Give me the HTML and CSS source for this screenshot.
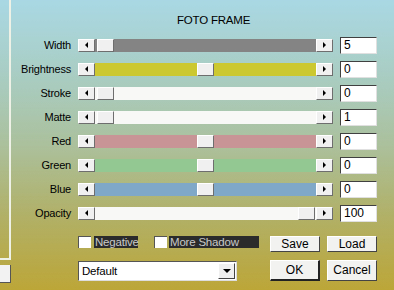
FILE: index.html
```html
<!DOCTYPE html>
<html lang="en">
<head>
  <meta charset="UTF-8" />
  <title>Foto Frame</title>
  <link rel="stylesheet" href="styles.css">
</head>
<body>
  <div class="dialog">
    <div class="side">
      <div class="pane"></div>
      <div class="side-btn"></div>
    </div>

    <div class="main">
      <div class="title">FOTO FRAME</div>

      <div class="rows">
        <label class="name">Width</label>
        <div class="slider">
          <span class="arrow left"></span>
          <div class="track gray"><span class="thumb" style="margin-left:2px"></span></div>
          <span class="arrow right"></span>
        </div>
        <input class="value" type="text" value="5" />

        <label class="name">Brightness</label>
        <div class="slider">
          <span class="arrow left"></span>
          <div class="track yellow"><span class="thumb" style="margin-left:102px"></span></div>
          <span class="arrow right"></span>
        </div>
        <input class="value" type="text" value="0" />

        <label class="name">Stroke</label>
        <div class="slider">
          <span class="arrow left"></span>
          <div class="track white"><span class="thumb" style="margin-left:2px"></span></div>
          <span class="arrow right"></span>
        </div>
        <input class="value" type="text" value="0" />

        <label class="name">Matte</label>
        <div class="slider">
          <span class="arrow left"></span>
          <div class="track white"><span class="thumb" style="margin-left:2px"></span></div>
          <span class="arrow right"></span>
        </div>
        <input class="value" type="text" value="1" />

        <label class="name">Red</label>
        <div class="slider">
          <span class="arrow left"></span>
          <div class="track red"><span class="thumb" style="margin-left:102px"></span></div>
          <span class="arrow right"></span>
        </div>
        <input class="value" type="text" value="0" />

        <label class="name">Green</label>
        <div class="slider">
          <span class="arrow left"></span>
          <div class="track green"><span class="thumb" style="margin-left:102px"></span></div>
          <span class="arrow right"></span>
        </div>
        <input class="value" type="text" value="0" />

        <label class="name">Blue</label>
        <div class="slider">
          <span class="arrow left"></span>
          <div class="track blue"><span class="thumb" style="margin-left:102px"></span></div>
          <span class="arrow right"></span>
        </div>
        <input class="value" type="text" value="0" />

        <label class="name">Opacity</label>
        <div class="slider">
          <span class="arrow left"></span>
          <div class="track white"><span class="thumb" style="margin-left:203px"></span></div>
          <span class="arrow right"></span>
        </div>
        <input class="value" type="text" value="100" />
      </div>

      <div class="bottom">
        <div class="options">
          <div class="checks">
            <span class="box"></span><span class="check-label">Negative</span>
            <span class="box second"></span><span class="check-label wide">More Shadow</span>
          </div>
          <div class="select">
            <span class="select-text">Default</span>
            <span class="select-btn"></span>
          </div>
        </div>
        <div class="buttons">
          <button class="btn">Save</button>
          <button class="btn">Load</button>
          <button class="btn big default">OK</button>
          <button class="btn big">Cancel</button>
        </div>
      </div>
    </div>
  </div>
</body>
</html>
```

FILE: styles.css
```css
html, body {
  margin: 0;
  height: 100%;
  overflow: hidden;
}
body {
  font-family: "Liberation Sans", Arial, sans-serif;
  font-size: 11px;
  letter-spacing: -0.2px;
  color: #000;
  background: linear-gradient(#a9d8e4 0%, #a9cbbd 30%, #abc09c 50%, #b1b066 75%, #bca638 100%);
}
.dialog {
  display: flex;
  height: 290px;
}

/* left edge of the parent window */
.side {
  width: 11px;
  flex: none;
}
.pane {
  height: 258px;
  width: 9px;
  border-right: 2px solid #eef2e6;
  border-bottom: 2px solid #eef2e6;
}
.side-btn {
  margin-top: 5px;
  height: 18px;
  width: 11px;
  box-sizing: border-box;
  background: #f2f2f2;
  border-right: 1px solid #555;
  border-bottom: 1px solid #555;
}

.main {
  flex: 1;
}
.title {
  padding: 14px 0 0 166px;
  height: 13px;
  line-height: 13px;
  font-size: 11.5px;
}
.rows {
  margin-top: 6px;
  display: grid;
  grid-template-columns: 60px 255px 37px;
  grid-auto-rows: 24px;
  column-gap: 7px;
  align-items: center;
}
.name {
  text-align: right;
}

.slider {
  display: flex;
  height: 13px;
}
.arrow, .thumb {
  box-sizing: border-box;
  width: 17px;
  height: 13px;
  background: #f0f0f0;
  border-top: 1px solid #fff;
  border-left: 1px solid #fff;
  border-right: 1px solid #6e6e6e;
  border-bottom: 1px solid #6e6e6e;
  flex: none;
}
.arrow {
  display: flex;
  align-items: center;
  justify-content: center;
}
.arrow::after {
  content: "";
  border-top: 3px solid transparent;
  border-bottom: 3px solid transparent;
}
.arrow.left::after {
  border-right: 3px solid #000;
}
.arrow.right::after {
  border-left: 3px solid #000;
}
.track {
  flex: 1;
  display: flex;
}
.thumb {
  display: block;
}
.gray { background: #848484; }
.yellow { background: #cbc92f; }
.white { background: #f8f8f6; }
.red { background: #c99496; }
.green { background: #93c893; }
.blue { background: #7fa7c8; }

.value {
  box-sizing: border-box;
  width: 37px;
  height: 17px;
  margin: 0;
  padding: 0 0 0 3px;
  font: inherit;
  font-size: 12px;
  background: #fff;
  border-top: 1px solid #404040;
  border-left: 1px solid #404040;
  border-right: 1px solid #e0e0e0;
  border-bottom: 1px solid #e0e0e0;
}

.bottom {
  display: flex;
  margin: 11px 0 0 67px;
}
.options {
  width: 192px;
}
.checks {
  display: flex;
  align-items: center;
  height: 12px;
}
.box {
  box-sizing: border-box;
  width: 13px;
  height: 12px;
  background: #fff;
  border-top: 1px solid #555;
  border-left: 1px solid #555;
  margin-right: 3px;
}
.box.second {
  margin-left: 16px;
  margin-right: 2px;
}
.check-label {
  background: #2b2b2b;
  color: #c8c8c8;
  height: 12px;
  line-height: 12px;
  width: 43px;
  padding-left: 1px;
  font-size: 11.5px;
}
.check-label.wide {
  width: 89px;
}
.select {
  margin-top: 13px;
  box-sizing: border-box;
  width: 159px;
  height: 20px;
  background: #fff;
  border-top: 1px solid #555;
  border-left: 1px solid #555;
  border-right: 1px solid #ddd;
  border-bottom: 1px solid #ddd;
  display: flex;
  align-items: center;
  justify-content: space-between;
  padding: 0 1px 0 3px;
}
.select-text {
  font-size: 11.5px;
}
.select-btn {
  box-sizing: border-box;
  width: 17px;
  height: 16px;
  background: #f0f0f0;
  border-top: 1px solid #fff;
  border-left: 1px solid #fff;
  border-right: 1px solid #444;
  border-bottom: 1px solid #444;
  display: flex;
  align-items: center;
  justify-content: center;
}
.select-btn::after {
  content: "";
  border-left: 4px solid transparent;
  border-right: 4px solid transparent;
  border-top: 4px solid #000;
}

.buttons {
  display: grid;
  grid-template-columns: 50px 50px;
  column-gap: 7px;
  row-gap: 7px;
  margin-left: 0;
}
.btn {
  box-sizing: border-box;
  height: 16px;
  margin: 0;
  padding: 0;
  font: inherit;
  font-size: 12px;
  color: #000;
  background: #f2f2f0;
  border-top: 1px solid #fff;
  border-left: 1px solid #fff;
  border-right: 1px solid #444;
  border-bottom: 1px solid #444;
}
.btn.big {
  height: 21px;
}
.btn.default {
  border-right: 2px solid #222;
  border-bottom: 2px solid #222;
}
```
